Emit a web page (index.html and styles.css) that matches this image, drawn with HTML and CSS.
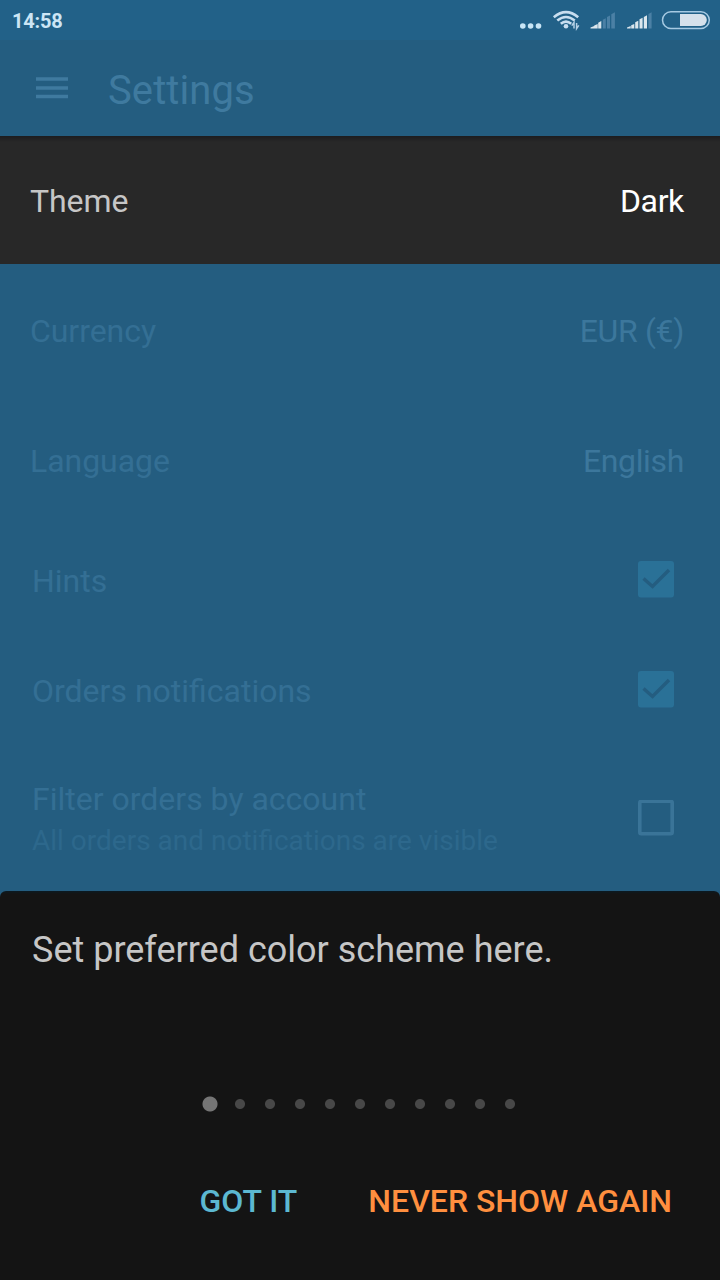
FILE: index.html
```html
<!DOCTYPE html>
<html lang="en">
<head>
<meta charset="utf-8">
<title>Settings</title>
<link rel="stylesheet" href="styles.css">
</head>
<body>
<div class="screen">
  <div class="status-bar">
    <span class="clock">14:58</span>
    <svg class="status-icons" width="200" height="40" viewBox="520 0 200 40">
      <g fill="#c8e5f5">
        <circle cx="522.8" cy="26" r="2.8"/><circle cx="530.6" cy="26" r="2.8"/><circle cx="538.5" cy="26" r="2.8"/>
      </g>
      <g fill="none" stroke="#c8def0" stroke-width="2.6">
        <path d="M553.8 17.2Q566 7 578.2 17.2"/>
        <path d="M557.3 20.6Q566 13.4 574.7 20.6"/>
        <path d="M560.8 23.8Q566 19.4 571.2 23.8"/>
      </g>
      <circle cx="566" cy="26.2" r="2.3" fill="#c8def0"/>
      <path d="M574 28.5v-6l-2.2 3.2M576.6 23v5.5l2.2-3.2" fill="none" stroke="#b4d0e5" stroke-width="1.5"/>
      <g fill="#dbe6ed">
        <path d="M590.5 28.5v-.9l3.7-1.7v2.6zM594.2 28.5v-2.9l3.5-1.7v4.6zM598.2 28.5v-5.8l3.1-1.7v7.5z"/>
        <path d="M627 28.5v-.9l3.7-1.7v2.6zM631.2 28.5v-3.2l3.1-1.4v4.6zM635.2 28.5v-6.2l3.1-1.5v7.7zM639.5 28.5v-9.2l3.1-1.5v10.7zM643.8 28.5v-11.4l3.2-1.8v13.2z"/>
      </g>
      <g fill="#4b80a5">
        <path d="M602.8 28.5v-8.7l3-1.6v10.3zM607 28.5v-11.4l3-1.6v13zM611.3 28.5v-14.2l3.6-2v16.2zM648.4 28.5v-14.4l3.2-1.8v16.2z"/>
      </g>
      <rect x="662.5" y="11.7" width="46.8" height="16.8" rx="8.4" fill="none" stroke="#a6cae3" stroke-width="1.5"/>
      <path d="M680 14h20.8a6 6 0 0 1 0 12H680z" fill="#d6e1eb"/>
    </svg>
  </div>
  <header class="app-bar">
    <svg class="menu-icon" width="32" height="24" viewBox="0 0 32 24"><path d="M0 3h32M0 12h32M0 20.5h32" stroke="#3f7a9f" stroke-width="3.6"/></svg>
    <h1 class="title">Settings</h1>
  </header>
  <main class="settings">
    <div class="option highlighted"><span>Theme</span><span class="value">Dark</span></div>
    <div class="option"><span>Currency</span><span class="value">EUR (€)</span></div>
    <div class="option"><span>Language</span><span class="value">English</span></div>
    <div class="toggle">
      <span>Hints</span>
      <svg class="check" width="36" height="37" viewBox="0 0 36 37"><rect width="36" height="36.5" rx="3" fill="#2a7197"/><path d="M5.5 17.5L14.5 25.5L31 9" fill="none" stroke="#245d80" stroke-width="3.4"/></svg>
    </div>
    <div class="toggle">
      <span>Orders notifications</span>
      <svg class="check" width="36" height="37" viewBox="0 0 36 37"><rect width="36" height="36.5" rx="3" fill="#2a7197"/><path d="M5.5 17.5L14.5 25.5L31 9" fill="none" stroke="#245d80" stroke-width="3.4"/></svg>
    </div>
    <div class="toggle tall">
      <div class="labels"><span>Filter orders by account</span><span class="note">All orders and notifications are visible</span></div>
      <svg class="check" width="36" height="36" viewBox="0 0 36 36"><rect x="1.8" y="1.3" width="32.4" height="32.4" rx="1.5" fill="none" stroke="#3a7498" stroke-width="3.6"/></svg>
    </div>
  </main>
  <section class="hint">
    <p class="message">Set preferred color scheme here.</p>
    <div class="pager">
      <i class="dot current"></i><i class="dot"></i><i class="dot"></i><i class="dot"></i><i class="dot"></i><i class="dot"></i><i class="dot"></i><i class="dot"></i><i class="dot"></i><i class="dot"></i><i class="dot"></i>
    </div>
    <div class="actions">
      <button class="action accept">GOT IT</button>
      <button class="action never">NEVER SHOW AGAIN</button>
    </div>
  </section>
</div>
</body>
</html>
```
FILE: styles.css
```css
* { box-sizing: border-box; }
body { margin: 0; font-family: Roboto, sans-serif; }
.screen {
  width: 720px;
  height: 1280px;
  display: flex;
  flex-direction: column;
  background: #245d80;
  overflow: hidden;
}
.status-bar {
  height: 40px;
  display: flex;
  justify-content: space-between;
  align-items: center;
  padding-left: 12px;
  background: #226188;
}
.clock { padding-top: 1px; font-size: 20px; font-weight: 700; letter-spacing: -0.2px; color: #cce5f5; }
.status-icons { display: block; }
.app-bar {
  height: 96px;
  display: flex;
  align-items: center;
  padding-left: 36px;
  gap: 40px;
}
.title { margin: 5px 0 0; font-size: 40px; font-weight: 400; line-height: 48px; letter-spacing: 0.1px; color: #3f7a9f; }
.settings {
  height: 755px;
  display: flex;
  flex-direction: column;
  font-size: 32px;
  line-height: 38px;
  letter-spacing: -0.05px;
  font-variant-ligatures: common-ligatures;
  color: #346f94;
}
.option {
  flex: none;
  height: 128px;
  margin-bottom: 2px;
  display: flex;
  justify-content: space-between;
  align-items: center;
  padding: 2px 36px 0 30px;
}
.value { letter-spacing: -0.35px; color: #3c779c; }
.highlighted {
  background: linear-gradient(#1c1c1f, #282828 6px);
  color: #c6c6c6;
}
.highlighted .value { color: #fff; }
.toggle {
  flex: none;
  height: 110px;
  display: flex;
  justify-content: space-between;
  align-items: center;
  padding: 0 46px 3px 32px;
  letter-spacing: 0;
}
.toggle > span { padding-top: 3px; }
.check { display: block; }
.tall { height: 145px; padding-bottom: 1px; }
.labels { display: flex; flex-direction: column; gap: 4px; padding-top: 4px; }
.note { font-size: 28px; color: #2d688c; }
.hint {
  height: 389px;
  display: flex;
  flex-direction: column;
  padding: 37px 32px 0;
  border-radius: 6px 6px 0 0;
  background: linear-gradient(#0b1a22, #141414 3px);
}
.message { margin: 0; font-size: 36px; line-height: 44px; color: #c6c6c6; }
.pager {
  display: flex;
  align-items: center;
  height: 16px;
  margin-top: 124px;
  padding-left: 163px;
}
.dot {
  flex: none;
  width: 30px;
  height: 16px;
  background: radial-gradient(circle, #484848 4.5px, transparent 5.5px);
}
.dot.current { background: radial-gradient(circle, #757575 7px, transparent 8px); }
.actions {
  display: flex;
  justify-content: flex-end;
  gap: 71px;
  margin-top: 70px;
  padding-right: 16px;
}
.action {
  padding: 0;
  border: 0;
  background: none;
  font: 500 32px/38px Roboto, sans-serif;
}
.accept { color: #5cb8d1; }
.never { color: #ff8f3f; }
```
